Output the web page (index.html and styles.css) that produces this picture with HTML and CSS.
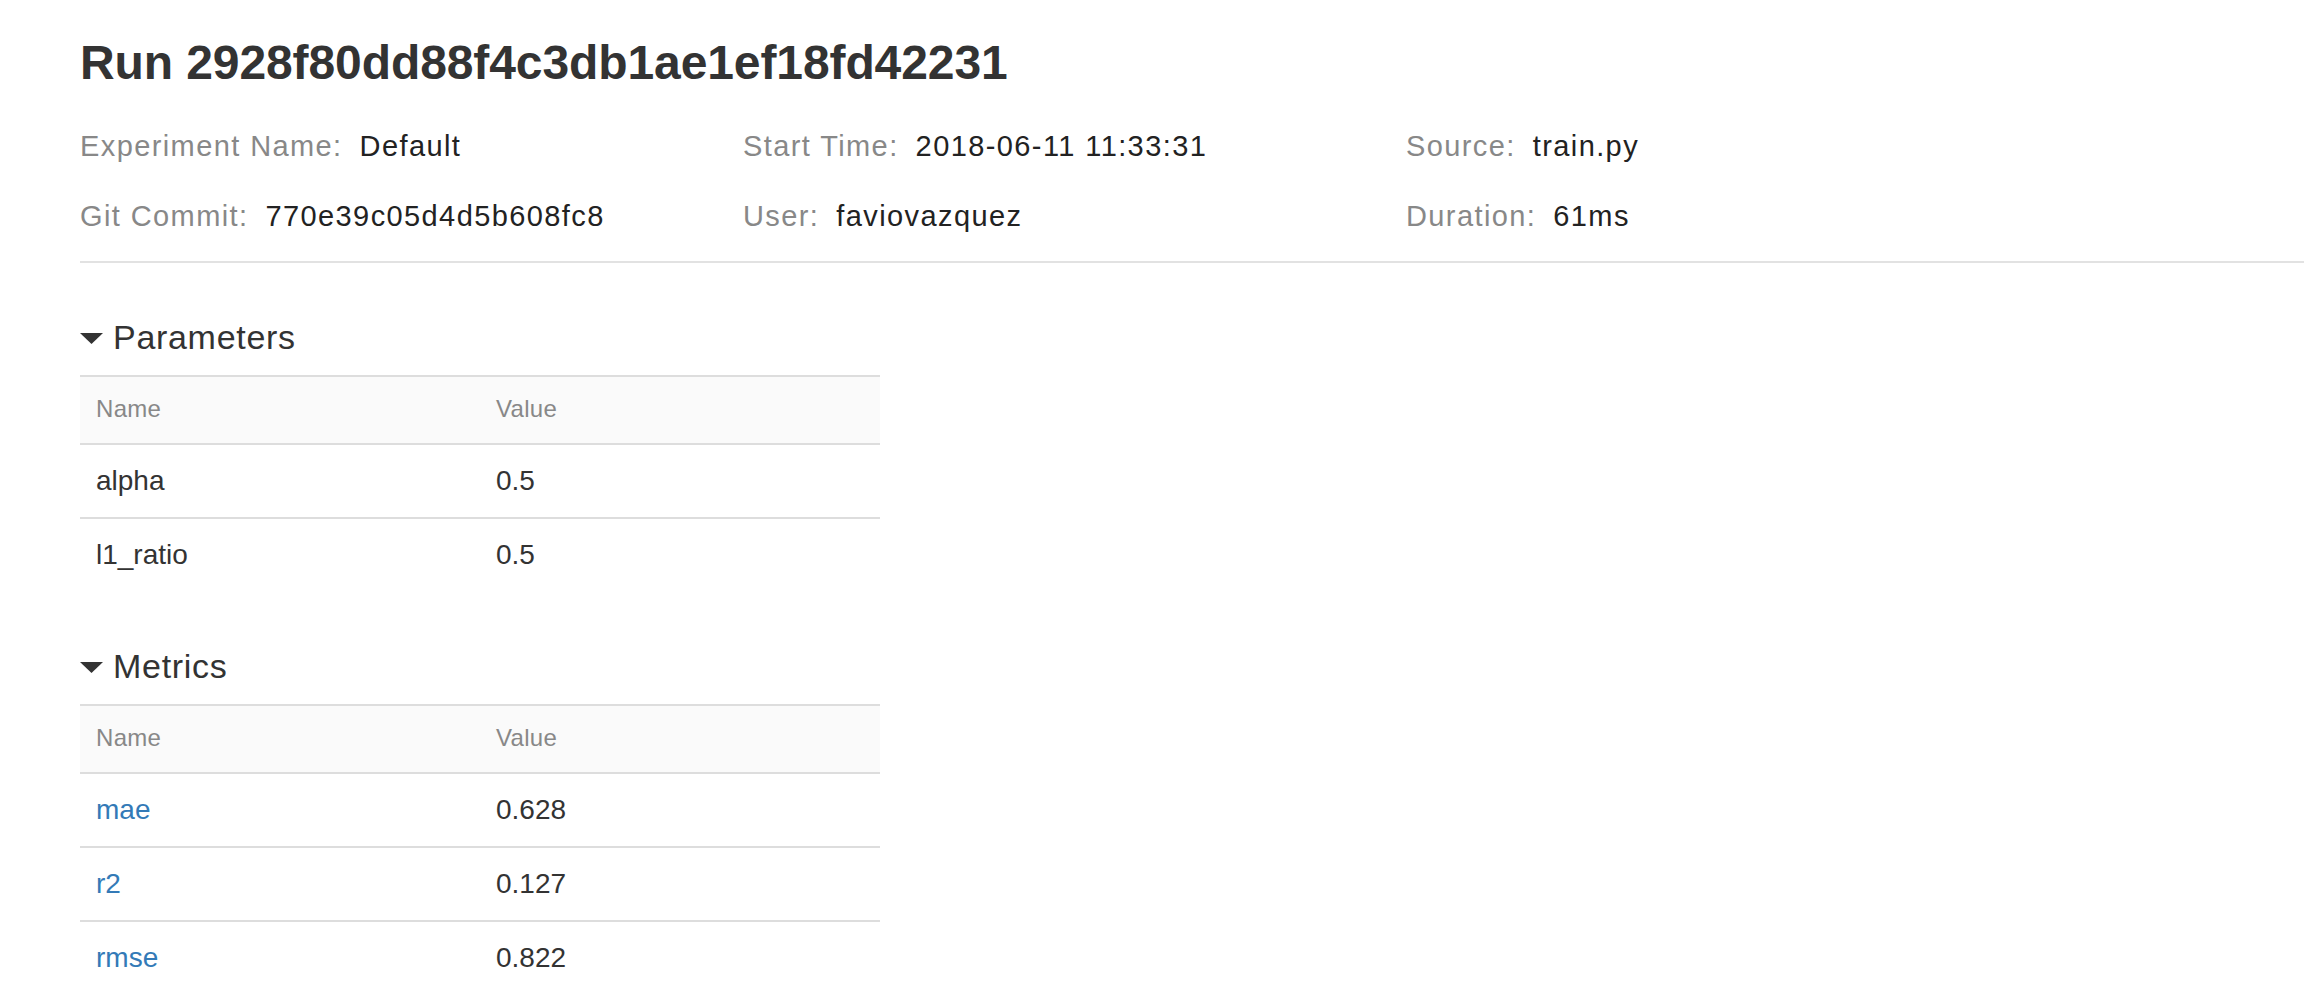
FILE: index.html
```html
<!DOCTYPE html>
<html>
<head>
<meta charset="utf-8">
<title>Run 2928f80dd88f4c3db1ae1ef18fd42231</title>
<link rel="stylesheet" href="styles.css">
</head>
<body>
<div class="page">
  <h1 class="run-title">Run 2928f80dd88f4c3db1ae1ef18fd42231</h1>
  <div class="meta">
    <div class="meta-item"><span class="meta-label">Experiment Name:</span><span class="meta-value">Default</span></div>
    <div class="meta-item"><span class="meta-label">Start Time:</span><span class="meta-value">2018-06-11 11:33:31</span></div>
    <div class="meta-item"><span class="meta-label">Source:</span><span class="meta-value">train.py</span></div>
    <div class="meta-item"><span class="meta-label">Git Commit:</span><span class="meta-value">770e39c05d4d5b608fc8</span></div>
    <div class="meta-item"><span class="meta-label">User:</span><span class="meta-value">faviovazquez</span></div>
    <div class="meta-item"><span class="meta-label">Duration:</span><span class="meta-value">61ms</span></div>
  </div>
  <hr class="divider">
  <div class="sections">
    <section class="section">
      <h2 class="section-title"><svg class="caret" width="23" height="11" viewBox="0 0 23 11"><path d="M0 0 L23 0 L11.5 11 Z" fill="#333"/></svg>Parameters</h2>
      <table class="kv-table">
        <colgroup><col class="col-name"><col class="col-value"></colgroup>
        <thead><tr><th>Name</th><th>Value</th></tr></thead>
        <tbody>
          <tr><td>alpha</td><td>0.5</td></tr>
          <tr><td>l1_ratio</td><td>0.5</td></tr>
        </tbody>
      </table>
    </section>
    <section class="section">
      <h2 class="section-title"><svg class="caret" width="23" height="11" viewBox="0 0 23 11"><path d="M0 0 L23 0 L11.5 11 Z" fill="#333"/></svg>Metrics</h2>
      <table class="kv-table">
        <colgroup><col class="col-name"><col class="col-value"></colgroup>
        <thead><tr><th>Name</th><th>Value</th></tr></thead>
        <tbody>
          <tr><td><a class="metric-link" href="#">mae</a></td><td>0.628</td></tr>
          <tr><td><a class="metric-link" href="#">r2</a></td><td>0.127</td></tr>
          <tr><td><a class="metric-link" href="#">rmse</a></td><td>0.822</td></tr>
        </tbody>
      </table>
    </section>
  </div>
</div>
</body>
</html>
```

FILE: styles.css
```css
html, body {
  margin: 0;
  padding: 0;
  background: #ffffff;
}

body {
  font-family: "Liberation Sans", Arial, Helvetica, sans-serif;
  color: #333333;
}

.page {
  padding: 35px 0 0 80px;
}

.run-title {
  margin: 0;
  font-size: 48px;
  line-height: 56px;
  font-weight: bold;
  letter-spacing: -0.1px;
  color: #333333;
}

.meta {
  margin-top: 35px;
  display: grid;
  grid-template-columns: repeat(3, 663px);
  row-gap: 30px;
  font-size: 29px;
  line-height: 40px;
  letter-spacing: 1.4px;
}

.meta-item {
  white-space: nowrap;
}

.meta-label {
  color: #888888;
  margin-right: 17px;
}

.meta-value {
  color: #222222;
}

.divider {
  margin: 25px 0 54px 0;
  border: 0;
  border-top: 2px solid #e2e2e2;
  height: 0;
}

.sections {
  display: flex;
  flex-direction: column;
  gap: 55px;
}

.section-title {
  margin: 0;
  display: flex;
  align-items: center;
  font-size: 34px;
  line-height: 40px;
  font-weight: normal;
  letter-spacing: 0.7px;
  color: #333333;
}

.caret {
  margin-right: 10px;
  flex: none;
  position: relative;
  top: 1px;
}

.kv-table {
  margin-top: 18px;
  width: 800px;
  table-layout: fixed;
  border-collapse: collapse;
}

.col-name {
  width: 400px;
}

.kv-table th {
  text-align: left;
  font-weight: normal;
  font-size: 24px;
  line-height: 34px;
  letter-spacing: 0.3px;
  color: #888888;
  background: #fafafa;
  padding: 15px 16px 17px 16px;
  border-top: 2px solid #dddddd;
  border-bottom: 2px solid #dddddd;
}

.kv-table td {
  font-size: 28px;
  line-height: 40px;
  color: #333333;
  padding: 16px 16px;
}

.kv-table tbody tr + tr td {
  border-top: 2px solid #dddddd;
}

.metric-link {
  color: #337ab7;
  text-decoration: none;
}
```
